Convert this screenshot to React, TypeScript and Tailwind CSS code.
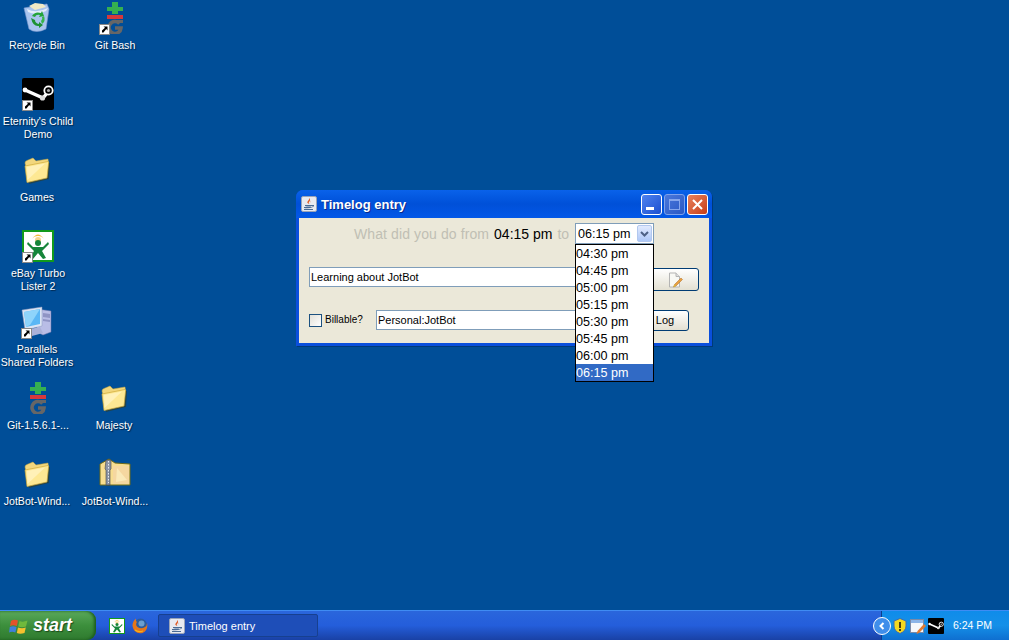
import React from "react";

const ShortcutArrow = () => (
  <svg viewBox="0 0 11 11" className="absolute left-0 bottom-[-1px] w-[11px] h-[11px]">
    <rect x="0.5" y="0.5" width="10" height="10" fill="#fff" stroke="#888" />
    <path d="M3 8.5 L3 6.5 L6 3.8 L4.5 2.5 L8.5 2.5 L8.5 6.5 L7.2 5 L4.5 8.5 Z" fill="#000" />
  </svg>
);

const RecycleBin = () => (
  <svg viewBox="0 0 32 32" className="w-8 h-8">
    <path d="M3 6 L26 2 L28 7 L25 27 Q15 32 8 27 Z" fill="#a9c4ee" stroke="#7d9bd0" strokeWidth="0.6" />
    <path d="M8 4 L14 1 L22 2 L25 5 L14 8 Z" fill="#f1e9c5" />
    <path d="M6 7 Q15 12 27 6 L25 9 Q15 14 7 10 Z" fill="#e4ecfb" />
    <path d="M11 14 Q14 9 20 11 L21 9 L23 14 L18 15 L19 13 Q15 12 14 15 Z" fill="#23a33a" />
    <path d="M10 16 L14 18 Q14 21 18 22 L18 20 L22 23 L18 26 L18 24 Q12 25 10 16 Z" fill="#1d9233" />
    <path d="M23 14 Q25 19 21 22 L20 19 Q22 17 21 15 Z" fill="#35b54a" />
  </svg>
);

const GitLogo = () => (
  <svg viewBox="0 0 32 32" className="w-8 h-8">
    <path d="M13 0 H19 V5 H24 V9 H19 V12 H13 V9 H8 V5 H13 Z" fill="#35b050" />
    <rect x="8" y="13" width="16" height="4" fill="#d7383c" />
    <path d="M20.5 21.5 A6 6 0 1 0 22 26 H16" fill="none" stroke="#666" strokeWidth="3.6" />
    <path d="M15 18 H24 V21 H15 Z" fill="#666" />
  </svg>
);

const SteamLogo = ({ size = 32 }: { size?: number }) => (
  <svg viewBox="0 0 32 32" width={size} height={size}>
    <rect width="32" height="32" rx="2" fill="#000" />
    <path d="M3 12 L21 20 L26 14" fill="none" stroke="#fff" strokeWidth="3.4" />
    <circle cx="3" cy="12" r="2.4" fill="#fff" />
    <circle cx="20.5" cy="20" r="2.6" fill="#ddd" />
    <circle cx="26.5" cy="12.5" r="4.2" fill="#000" stroke="#fff" strokeWidth="1.8" />
    <circle cx="26.5" cy="12.5" r="1.6" fill="#aaa" />
  </svg>
);

const Folder = () => (
  <svg viewBox="0 0 32 32" className="w-8 h-8">
    <path d="M6 12 L28 8 L27 24 L7 29 Z" fill="#3d3a10" opacity="0.55" transform="translate(1 1)" />
    <path d="M4 9 Q4 7 6 6.5 L12 4 L15 7 L27 5 L27.5 9 L5 13 Z" fill="#f2d77d" stroke="#c9a83f" strokeWidth="0.5" />
    <path d="M4 12 L27 7.5 Q28 7.5 27.5 9.5 L26 24 L6 28.5 Z" fill="#fde893" stroke="#cfa93a" strokeWidth="0.7" />
    <path d="M6.5 26 L6 13 L24 9.5 Z" fill="#fff4c4" opacity="0.75" />
  </svg>
);

const ZipFolder = () => (
  <svg viewBox="0 0 32 32" className="w-8 h-8">
    <path d="M1 6 L10 1 L16 5 L31 6 V27 H1 Z" fill="#f7dd90" stroke="#6d6a1a" strokeWidth="1" />
    <path d="M14 8 H30 V26 H14 Z" fill="#f5d7a0" />
    <path d="M18 10 L28 22 L17 24 Z" fill="#fae9b8" />
    <path d="M7 2 H12 V11 L11 12 V27 H7 V12 L6 11 Z" fill="#8b94a6" stroke="#444" strokeWidth="0.6" />
    <path d="M9.5 3 V25" stroke="#e8ebf2" strokeWidth="1" strokeDasharray="1.5 1.5" />
  </svg>
);

const EbayLister = ({ size = 32 }: { size?: number }) => (
  <svg viewBox="0 0 32 32" width={size} height={size}>
    <rect x="1" y="1" width="30" height="30" fill="#fff" stroke="#129a1c" strokeWidth="2" />
    <path d="M10 9 Q16 0 22 9 Q20 6 16 6 Q12 6 10 9 Z" fill="#f1b93a" />
    <circle cx="16" cy="10" r="3" fill="#f4d48c" />
    <circle cx="16" cy="13" r="3" fill="#16853a" />
    <path d="M6 12 L11 17 H21 L26 12 L27 14 L20 21 L24 28 L21 29 L16 23 L11 29 L8 28 L12 21 L5 14 Z" fill="#16853a" />
  </svg>
);

const Computer = () => (
  <svg viewBox="0 0 32 32" className="w-8 h-8">
    <path d="M16 3 L30 5 V26 L22 29 L16 26 Z" fill="#b9bde6" stroke="#7376a8" strokeWidth="0.5" />
    <path d="M22 7 L29 8 V12 L22 11 Z M22 13 L29 14 V16 L22 15 Z" fill="#8f94c4" />
    <path d="M1 4 L21 1 L21 20 L4 24 Z" fill="#dbe4f4" stroke="#8a99bd" strokeWidth="0.5" />
    <path d="M3 6 L19 3 L19 18 L5 21 Z" fill="#5ab7f5" />
    <path d="M3 6 L19 3 L9 19 L5 21 Z" fill="#8ed4fb" />
    <path d="M9 23 L19 21 L22 27 L11 30 Z" fill="#aab1d8" />
  </svg>
);

const JavaIcon = ({ size = 16 }: { size?: number }) => (
  <svg viewBox="0 0 16 16" width={size} height={size}>
    <rect x="0.5" y="0.5" width="15" height="15" rx="1.5" fill="#e8eaf0" stroke="#9aa4b8" />
    <path d="M8 2 Q10 4 8 6 Q7 7 8.5 8 Q5 7 7 5 Q8.5 3.5 8 2 Z" fill="#e0561e" />
    <path d="M10 4 Q9 6 10 7 Q8.5 6 10 4 Z" fill="#e0561e" />
    <path d="M4 9 H11 V10 Q8 11 4 10 Z M3 11 H12 Q8 13 3 12 Z" fill="#4a6b94" />
    <path d="M11 9 H13 V10.5 H11 Z" fill="#4a6b94" />
    <path d="M3 13.5 H12" stroke="#4a6b94" strokeWidth="1" />
  </svg>
);

const NoteEditIcon = () => (
  <svg viewBox="0 0 16 16" className="w-4 h-4">
    <path d="M2.5 1 H9 L12.5 4.5 V15 H2.5 Z" fill="#f8f8f4" stroke="#b4b4b4" />
    <path d="M9 1 V4.5 H12.5" fill="#e0e0e0" stroke="#b4b4b4" />
    <path d="M14 6 L15.5 7.5 L9 14 L6.5 15 L7.5 12.5 Z" fill="#e8a040" stroke="#b06a24" strokeWidth="0.5" />
    <path d="M6.5 15 L7.5 12.5 L9 14 Z" fill="#d8c040" />
  </svg>
);

const WindowsFlag = () => (
  <svg viewBox="0 0 20 20" className="w-[20px] h-[20px]">
    <path d="M2 5 Q5 3 9 4.5 L7.8 10 Q4 8.5 1 10 Z" fill="#e2532a" />
    <path d="M10.5 5 Q14 6.5 18.5 4.5 L17 10.5 Q13 12 9.2 10.5 Z" fill="#6fb93c" />
    <path d="M0.8 11 Q4 9.5 7.5 11 L6.4 16.5 Q3 15 0 16.5 Z" fill="#3f7fdc" />
    <path d="M9 11.5 Q13 13 16.8 11.5 L15.5 17 Q11 18.5 7.8 17 Z" fill="#f5c12e" />
  </svg>
);

const Firefox = () => (
  <svg viewBox="0 0 16 16" className="w-4 h-4">
    <circle cx="8.5" cy="7" r="6.5" fill="#2b5c9e" />
    <circle cx="9.5" cy="5.5" r="3" fill="#6a9fd0" />
    <path d="M0.5 8 Q0.5 3 4 0.5 Q3.5 3 5 4 Q3 6.5 5.5 9 Q9 11.5 13 9 Q15 8 15 5 Q16.5 12 10.5 15 Q2 16.5 0.5 8 Z" fill="#e5761a" />
    <path d="M3 12 Q6 14.5 11 13" stroke="#f6b21b" strokeWidth="1.2" fill="none" />
  </svg>
);

const Shield = () => (
  <svg viewBox="0 0 14 16" className="w-[14px] h-4">
    <path d="M7 0.5 L13 3 V8 Q13 13 7 15.5 Q1 13 1 8 V3 Z" fill="#f5d91f" stroke="#3e6bb0" strokeWidth="1" />
    <rect x="6" y="4" width="2" height="6" fill="#4a3f10" />
    <rect x="6" y="11" width="2" height="2" fill="#4a3f10" />
  </svg>
);

const TrayNote = () => (
  <svg viewBox="0 0 16 16" className="w-4 h-4">
    <rect x="0.5" y="1.5" width="13" height="13" fill="#f4f7fb" stroke="#7a8aa8" />
    <rect x="1" y="2" width="12" height="3" fill="#8bb4e8" />
    <path d="M14 6 L16 8 L9 15 L6.5 16 L7.5 13 Z" fill="#e07a30" />
  </svg>
);

type DeskItem = { left: number; top: number; label: string[]; icon: React.ReactNode; shortcut?: boolean };

const items: DeskItem[] = [
  { left: 37, top: 2, label: ["Recycle Bin"], icon: <RecycleBin /> },
  { left: 115, top: 2, label: ["Git Bash"], icon: <GitLogo />, shortcut: true },
  { left: 38, top: 78, label: ["Eternity's Child", "Demo"], icon: <SteamLogo />, shortcut: true },
  { left: 37, top: 154, label: ["Games"], icon: <Folder /> },
  { left: 38, top: 230, label: ["eBay Turbo", "Lister 2"], icon: <EbayLister />, shortcut: true },
  { left: 37, top: 306, label: ["Parallels", "Shared Folders"], icon: <Computer />, shortcut: true },
  { left: 38, top: 382, label: ["Git-1.5.6.1-..."], icon: <GitLogo /> },
  { left: 114, top: 382, label: ["Majesty"], icon: <Folder /> },
  { left: 37, top: 458, label: ["JotBot-Wind..."], icon: <Folder /> },
  { left: 115, top: 458, label: ["JotBot-Wind..."], icon: <ZipFolder /> },
];

const times = ["04:30 pm", "04:45 pm", "05:00 pm", "05:15 pm", "05:30 pm", "05:45 pm", "06:00 pm", "06:15 pm"];

const sans = "font-['Liberation_Sans',sans-serif]";

function TimelogWindow() {
  return (
    <div className={`absolute left-[296px] top-[190px] w-[416px] h-[156px] flex flex-col rounded-t-[7px] bg-[#0a4fdc] px-[3px] pb-[3px] shadow-[1px_1px_0_#003a78] ${sans}`}>
      {/* title bar */}
      <div className="h-[28px] -mx-[3px] pl-[5px] pr-[4px] flex items-center rounded-t-[7px] bg-gradient-to-b from-[#0a62ea] via-[#0050d8] to-[#0358e8]">
        <JavaIcon />
        <span className="ml-[4px] mt-[1px] text-[13px] font-bold text-white [text-shadow:1px_1px_0_#0a2a8c]">
          Timelog entry
        </span>
        <div className="ml-auto flex gap-[2px]">
          <div className="w-[21px] h-[21px] rounded-[3px] border border-white bg-gradient-to-br from-[#4f82ef] to-[#1c4fd0] relative">
            <div className="absolute left-[4px] bottom-[4px] w-[8px] h-[3px] bg-white" />
          </div>
          <div className="w-[21px] h-[21px] rounded-[3px] border border-[#7ea2ec] bg-gradient-to-br from-[#4a78dc] to-[#2a58c4] flex items-center justify-center">
            <div className="w-[11px] h-[11px] border border-[#86a6ec] border-t-2" />
          </div>
          <div className="w-[21px] h-[21px] rounded-[3px] border border-white bg-gradient-to-br from-[#e8805c] to-[#c63c14] flex items-center justify-center">
            <svg viewBox="0 0 11 11" className="w-[11px] h-[11px]">
              <path d="M1 1 L10 10 M10 1 L1 10" stroke="#fff" strokeWidth="2" />
            </svg>
          </div>
        </div>
      </div>

      {/* client area */}
      <div className="flex-1 bg-[#ebe8d9] relative flex flex-col">
        <div className="h-[26px] mt-[3px] flex items-center text-[14px] pl-[55px]">
          <span className="text-[#c0bfb4] tracking-[0.1px]">What did you do from</span>
          <span className="ml-[5px] text-black">04:15 pm</span>
          <span className="ml-[5px] text-[#c0bfb4]">to</span>
        </div>
        <div className="mt-[20px] ml-[10px] h-[24px] flex items-start">
          <div className="w-[330px] h-[20px] border border-[#7f9db9] bg-white flex items-center pl-[1px] text-[11px] text-black">
            Learning about JotBot
          </div>
          <button className="ml-[11px] mt-[1px] w-[49px] h-[23px] rounded-[3px] border border-[#003c74] bg-gradient-to-b from-white to-[#e3e0d2] flex items-center justify-center">
            <NoteEditIcon />
          </button>
        </div>
        <div className="mt-[19px] ml-[10px] flex items-start text-[11px] text-black">
          <div className="mt-[4px] w-[13px] h-[13px] border border-[#1c5180] bg-gradient-to-br from-[#e2e0d8] to-white" />
          <span className="ml-[3px] w-[37px] h-[20px] leading-[20px] text-[10px] whitespace-nowrap">Billable?</span>
          <div className="ml-[14px] w-[254px] h-[20px] border border-[#7f9db9] bg-white flex items-center pl-[1px]">
            Personal:JotBot
          </div>
          <button className="ml-[11px] w-[48px] h-[21px] rounded-[3px] border border-[#003c74] bg-gradient-to-b from-white to-[#e3e0d2] flex items-center justify-center">
            Log
          </button>
        </div>

        {/* open combo box */}
        <div className="absolute left-[276px] top-[5px] w-[79px] h-[21px] border border-[#7f9db9] bg-white flex items-center pl-[2px] pt-[1px] text-[12.6px] text-black">
          06:15 pm
          <div className="absolute right-[1px] top-[1px] w-[15px] h-[17px] rounded-[2px] border border-[#b2c8ef] bg-gradient-to-b from-[#e1eafe] to-[#aec8f7] flex items-center justify-center">
            <svg viewBox="0 0 9 6" className="w-[9px] h-[6px]">
              <path d="M1 1 L4.5 4.5 L8 1" stroke="#4d6185" strokeWidth="2" fill="none" />
            </svg>
          </div>
        </div>
        <div className="absolute left-[276px] top-[26px] w-[79px] h-[138px] border border-black bg-white text-[12.6px] text-black">
          {times.map((t) => (
            <div
              key={t}
              className={`h-[17px] leading-[19px] ${t === "06:15 pm" ? "bg-[#316ac5] text-white" : ""}`}
            >
              {t}
            </div>
          ))}
        </div>
      </div>
    </div>
  );
}

function Taskbar() {
  return (
    <div className={`h-[30px] flex items-stretch bg-gradient-to-b from-[#2a66dc] via-[#245edb] to-[#1941a5] border-t border-[#3f8cf3] ${sans}`}>
      <div className="w-[96px] flex items-center pl-[9px] rounded-r-[9px] bg-gradient-to-b from-[#5aa85a] via-[#3c8f3c] to-[#2f7a2f] shadow-[inset_-2px_0_3px_#1c5c1c]">
        <WindowsFlag />
        <span className="ml-[4px] text-[18px] font-bold italic text-white [text-shadow:1px_1px_1px_#1a4a1a]">
          start
        </span>
      </div>
      <div className="flex items-center ml-[13px] gap-[7px]">
        <EbayLister size={16} />
        <Firefox />
      </div>
      <div className="ml-[10px] my-[3px] w-[160px] flex items-center pl-[10px] rounded-[2px] bg-[#1e4eb8] border border-[#17408f] text-[11px] text-white">
        <JavaIcon />
        <span className="ml-[4px] pt-[1px]">Timelog entry</span>
      </div>
      <div className="ml-auto w-[128px] flex items-center bg-gradient-to-b from-[#0f8cea] via-[#1590e8] to-[#0f6fd0] border-l border-[#0c3f8c] text-[11px] text-white">
        <div className="ml-[-9px] w-[18px] h-[18px] rounded-full bg-[#3f8eea] border border-white flex items-center justify-center">
          <svg viewBox="0 0 8 8" className="w-[8px] h-[8px]">
            <path d="M5.5 1 L2.5 4 L5.5 7" stroke="#fff" strokeWidth="2" fill="none" />
          </svg>
        </div>
        <div className="ml-[2px]"><Shield /></div>
        <div className="ml-[3px]"><TrayNote /></div>
        <div className="ml-[2px]"><SteamLogo size={16} /></div>
        <span className="ml-[9px] text-[10.5px]">6:24 PM</span>
      </div>
    </div>
  );
}

export default function App() {
  return (
    <div className="w-[1009px] h-[640px] relative overflow-hidden bg-[#004e98] flex flex-col justify-end">
      {items.map((item, i) => (
        <div
          key={i}
          className={`absolute w-[76px] -ml-[38px] flex flex-col items-center text-[10.6px] leading-[13px] text-white [text-shadow:1px_1px_1px_#00264a] ${sans}`}
          style={{ left: item.left, top: item.top }}
        >
          <div className="relative w-8 h-8">
            {item.icon}
            {item.shortcut && <ShortcutArrow />}
          </div>
          <div className="mt-[5px] text-center whitespace-nowrap">
            {item.label.map((l) => (
              <div key={l}>{l}</div>
            ))}
          </div>
        </div>
      ))}
      <TimelogWindow />
      <Taskbar />
    </div>
  );
}
